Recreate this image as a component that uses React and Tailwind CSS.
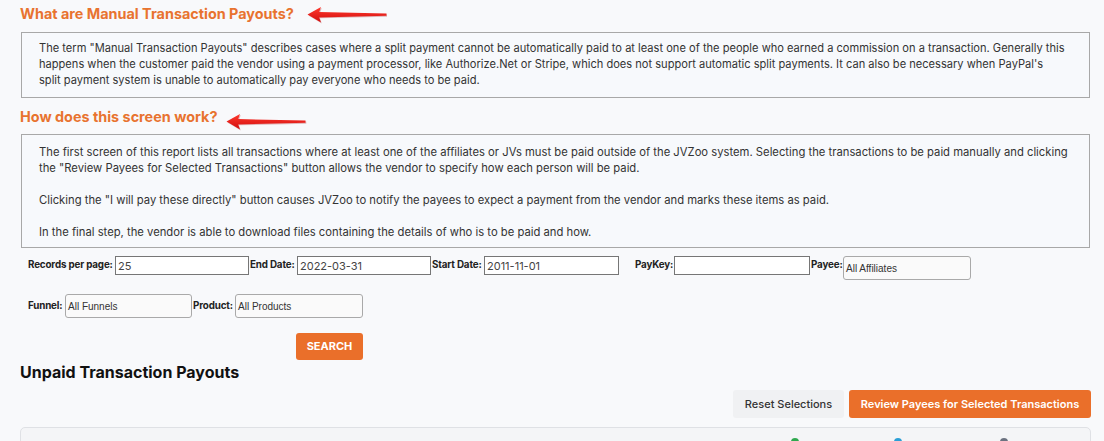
import React from 'react';

// Red annotation arrow pointing left
function Arrow({ className = '' }) {
  const d = 'M0.5 8.5 L14 1 L12.2 6 L79.5 7.6 L79.5 9.8 L12.2 11.4 L14 16.5 Z';
  return (
    <svg viewBox="0 0 80 18" className={className}>
      <defs>
        <linearGradient id="arrowRed" x1="0" y1="0" x2="0" y2="1">
          <stop offset="0" stopColor="#ff3a2e" />
          <stop offset="1" stopColor="#d10d0d" />
        </linearGradient>
      </defs>
      <path d={d} fill="#9a0000" opacity="0.25" transform="translate(0.8 0.9)" />
      <path d={d} fill="url(#arrowRed)" />
    </svg>
  );
}

function TextInput({ value, width = 'w-[134px]' }) {
  return (
    <input
      readOnly
      value={value}
      className={`${width} h-[19px] border border-[#767676] bg-white px-[2px] text-[11px] text-[#444] outline-none`}
    />
  );
}

function SelectBox({ value, width = 'w-[128px]' }) {
  return (
    <div className={`${width} h-[24px] rounded-[3px] border border-[#a9a9a9] bg-[#fafafa] px-[2px] flex items-center text-[10px] text-[#333] font-['Liberation_Sans',Arial,sans-serif]`}>
      {value}
    </div>
  );
}

function Label({ children, className = '' }) {
  return <span className={`text-[9.8px] tracking-[-0.15px] font-bold text-[#222] whitespace-nowrap ${className}`}>{children}</span>;
}

export default function App() {
  return (
    <div className="h-[441px] w-[1104px] overflow-hidden bg-[#f8f9fb] font-['Inter','Noto_Sans',sans-serif] text-[#333]">
      <div className="pl-[20px] pr-[14px] pt-[4px]">
        {/* Section 1 */}
        <div className="flex items-center h-[20px]">
          <h2 className="text-[14.4px] font-bold text-[#e8732f] leading-[20px]">What are Manual Transaction Payouts?</h2>
          <Arrow className="ml-[13px] mt-[1px] w-[80px] h-[18px]" />
        </div>
        <div className="mt-[8px] ml-[1px] border border-[#a8a8a8] bg-[#f7f9fc] pl-[17px] pr-[4px] pt-[7px] pb-[9px] text-[11.1px] leading-[16px] text-[#333]">
          The term "Manual Transaction Payouts" describes cases where a split payment cannot be automatically paid to at least one of the people who earned a commission on a transaction. Generally this
          <br />
          happens when the customer paid the vendor using a payment processor, like Authorize.Net or Stripe, which does not support automatic split payments. It can also be necessary when PayPal's
          <br />
          split payment system is unable to automatically pay everyone who needs to be paid.
        </div>

        {/* Section 2 */}
        <div className="mt-[9px] flex items-center h-[20px]">
          <h2 className="text-[14.4px] font-bold text-[#e8732f] leading-[20px]">How does this screen work?</h2>
          <Arrow className="ml-[5px] mt-[9px] w-[86px] h-[18px]" />
        </div>
        <div className="mt-[7px] ml-[1px] border border-[#a8a8a8] bg-[#f7f9fc] pl-[17px] pr-[4px] pt-[9px] pb-[7px] text-[11.25px] leading-[16px] text-[#333]">
          <p className="mb-[16px]">
            The first screen of this report lists all transactions where at least one of the affiliates or JVs must be paid outside of the JVZoo system. Selecting the transactions to be paid manually and clicking
            <br />
            the "Review Payees for Selected Transactions" button allows the vendor to specify how each person will be paid.
          </p>
          <p className="mb-[16px]">
            Clicking the "I will pay these directly" button causes JVZoo to notify the payees to expect a payment from the vendor and marks these items as paid.
          </p>
          <p>In the final step, the vendor is able to download files containing the details of who is to be paid and how.</p>
        </div>
      </div>

      {/* Filters */}
      <div className="pl-[28px] mt-[8px]">
        <div className="flex items-start h-[24px]">
          <div className="flex items-center h-[19px]">
            <Label className="w-[87px]">Records per page:</Label>
            <TextInput value="25" />
            <Label className="w-[48px] pl-[1px]">End Date:</Label>
            <TextInput value="2022-03-31" />
            <Label className="w-[53px] pl-[1px]">Start Date:</Label>
            <TextInput value="2011-11-01" width="w-[135px]" />
            <Label className="w-[55px] pl-[16px]">PayKey:</Label>
            <TextInput value="" width="w-[136px]" />
            <Label className="w-[33px] pl-[1px]">Payee:</Label>
          </div>
          <SelectBox value="All Affiliates" />
        </div>
        <div className="mt-[14px] flex items-center h-[24px]">
          <Label className="w-[37px]">Funnel:</Label>
          <SelectBox value="All Funnels" width="w-[127px]" />
          <Label className="w-[43px] pl-[1px]">Product:</Label>
          <SelectBox value="All Products" width="w-[128px]" />
        </div>
        <button className="mt-[15px] ml-[268px] h-[27px] w-[67px] rounded-[3px] bg-[#ea6f2a] text-[11px] font-bold text-white">
          SEARCH
        </button>
      </div>

      {/* Unpaid transactions */}
      <div className="pl-[20px] pr-[13px]">
        <h3 className="mt-[1px] text-[16px] font-bold leading-[22px] text-[#111]">Unpaid Transaction Payouts</h3>
        <div className="mt-[7px] flex justify-end gap-[5px]">
          <button className="h-[28px] w-[111px] rounded-[3px] bg-[#f0f1f3] text-[11px] font-medium text-[#333]">Reset Selections</button>
          <button className="h-[28px] w-[242px] rounded-[3px] bg-[#ea6f2a] text-[11px] font-semibold text-white">
            Review Payees for Selected Transactions
          </button>
        </div>
        <div className="mt-[9px] h-[40px] rounded-t-[5px] border border-[#dfe1e5] bg-[#f4f5f7] relative">
          <span className="absolute left-[770px] top-[10px] w-[8px] h-[8px] rounded-full bg-[#2fa84f]" />
          <span className="absolute left-[873px] top-[10px] w-[8px] h-[8px] rounded-full bg-[#2b9fd6]" />
          <span className="absolute left-[979px] top-[10px] w-[8px] h-[8px] rounded-full bg-[#6b7280]" />
        </div>
      </div>
    </div>
  );
}
